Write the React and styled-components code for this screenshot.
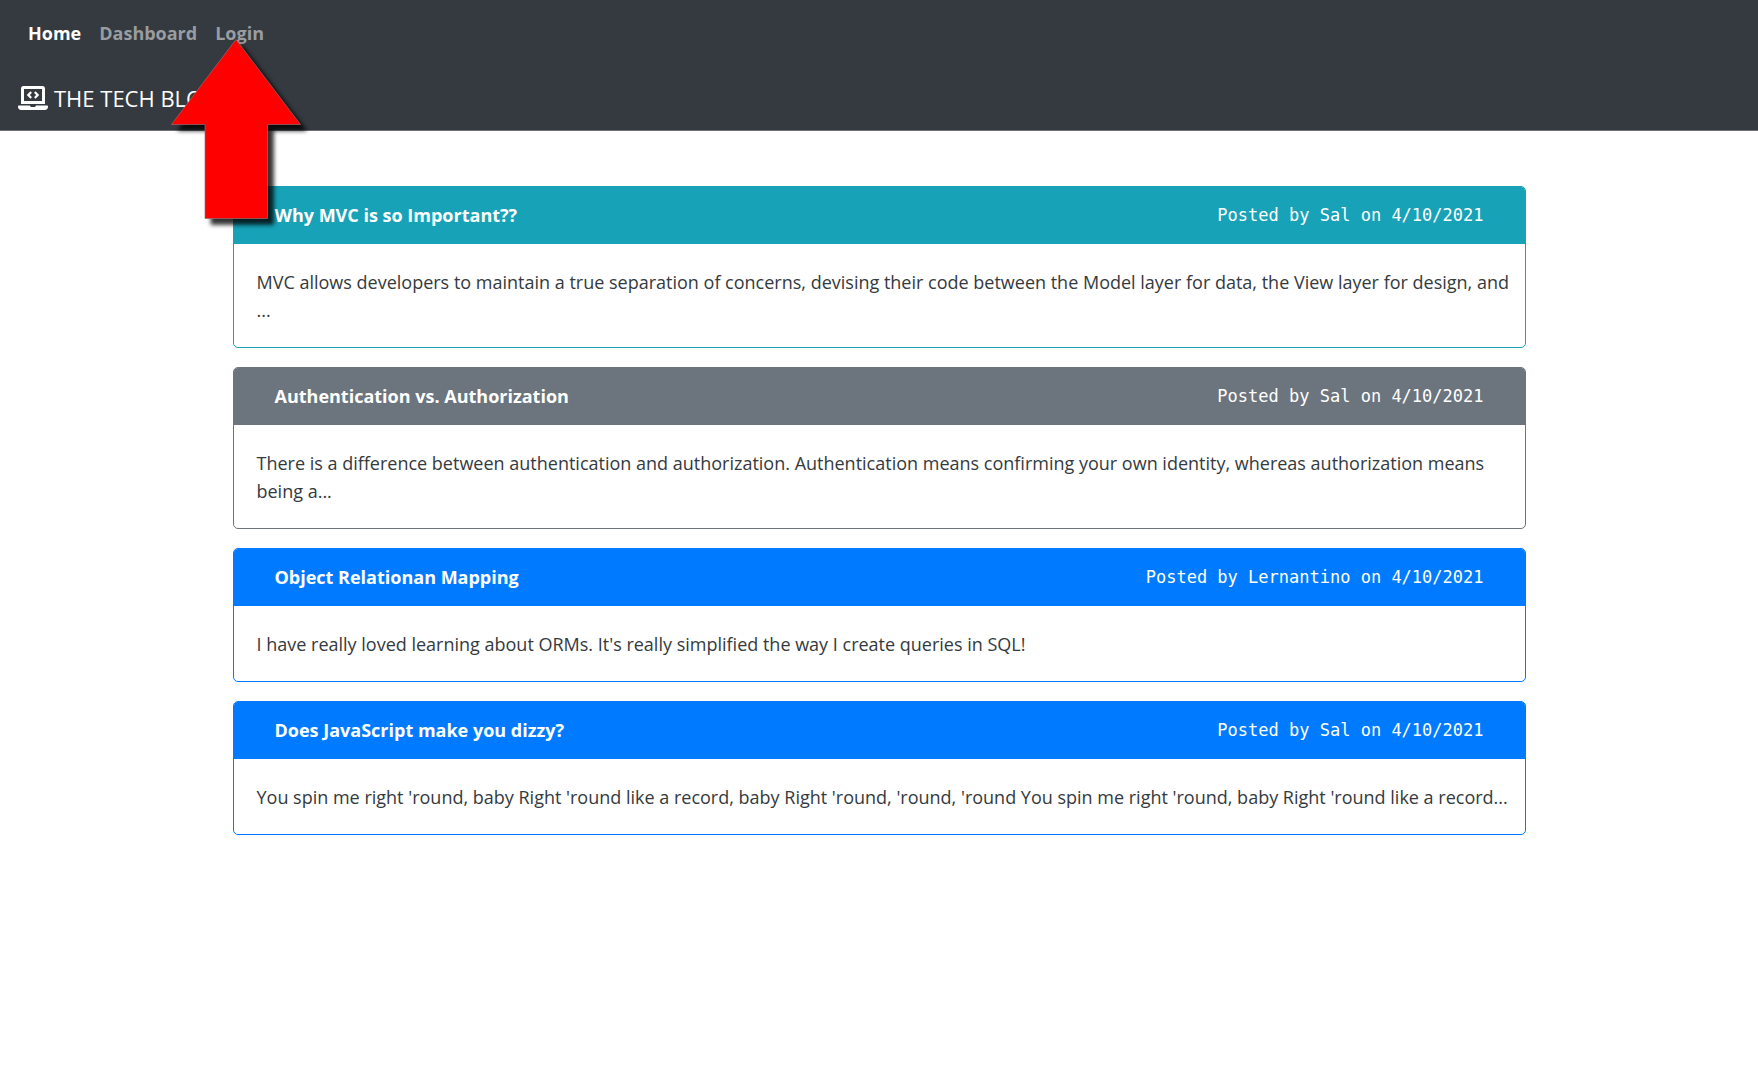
import React from "react";
import styled, { createGlobalStyle } from "styled-components";
import { FaLaptopCode } from "react-icons/fa";

const GlobalStyle = createGlobalStyle`
  *, *::before, *::after { box-sizing: border-box; }
  body {
    margin: 0;
    background: #fff;
    color: #343a40;
    font-family: "Open Sans", "Noto Sans", sans-serif;
    font-size: 18px;
    line-height: 28px;
  }
`;

const Header = styled.header`
  display: flex;
  flex-direction: column;
  gap: 20px;
  padding: 9px 18px 11px;
  background: #343a40;
  border-bottom: 1px solid #6c7075;
`;

const Nav = styled.nav`
  display: flex;
  gap: 18px;
  padding: 10px;
`;

const NavLink = styled.a`
  font-weight: 700;
  text-decoration: none;
  color: ${({ $active }) => ($active ? "#fff" : "#9a9da0")};
`;

const Brand = styled.a`
  display: flex;
  align-items: center;
  gap: 6px;
  padding: 4px 0;
  color: #fff;
  font-size: 22px;
  line-height: 34px;
  text-decoration: none;
`;

const BrandIcon = styled(FaLaptopCode)`
  width: 30px;
  height: 24px;
`;

const Main = styled.main`
  display: flex;
  flex-direction: column;
  gap: 19px;
  max-width: 1293px;
  margin: 55px auto;
`;

const Card = styled.article`
  border: 1px solid ${({ $tone }) => $tone};
  border-radius: 5px;
  overflow: hidden;
`;

const CardHeader = styled.div`
  display: flex;
  align-items: center;
  justify-content: space-between;
  padding: 14px 41px 15px;
  background: ${({ $tone }) => $tone};
  color: #fff;
`;

const Title = styled.h2`
  margin: 0;
  font-size: 18px;
  line-height: 28px;
  font-weight: 700;
`;

const Meta = styled.span`
  font-family: "DejaVu Sans Mono", monospace;
  font-size: 17px;
`;

const Body = styled.p`
  margin: 0;
  padding: 24px 12px 23px 23px;
`;

const Arrow = styled.svg`
  position: absolute;
  left: 160px;
  top: 30px;
  filter: drop-shadow(6px 6px 2px rgba(0, 0, 0, 0.8));
  pointer-events: none;
`;

const posts = [
  {
    title: "Why MVC is so Important??",
    author: "Sal",
    tone: "#17a2b8",
    text: "MVC allows developers to maintain a true separation of concerns, devising their code between the Model layer for data, the View layer for design, and ...",
  },
  {
    title: "Authentication vs. Authorization",
    author: "Sal",
    tone: "#6c757d",
    text: "There is a difference between authentication and authorization. Authentication means confirming your own identity, whereas authorization means being a...",
  },
  {
    title: "Object Relationan Mapping",
    author: "Lernantino",
    tone: "#007bff",
    text: "I have really loved learning about ORMs. It's really simplified the way I create queries in SQL!",
  },
  {
    title: "Does JavaScript make you dizzy?",
    author: "Sal",
    tone: "#007bff",
    text: "You spin me right 'round, baby Right 'round like a record, baby Right 'round, 'round, 'round You spin me right 'round, baby Right 'round like a record...",
  },
];

export default function App() {
  return (
    <>
      <GlobalStyle />
      <Header>
        <Nav>
          <NavLink href="#home" $active>Home</NavLink>
          <NavLink href="#dashboard">Dashboard</NavLink>
          <NavLink href="#login">Login</NavLink>
        </Nav>
        <Brand href="#home">
          <BrandIcon aria-hidden="true" />
          THE TECH BLOG
        </Brand>
      </Header>
      <Main>
        {posts.map((post) => (
          <Card key={post.title} $tone={post.tone}>
            <CardHeader $tone={post.tone}>
              <Title>{post.title}</Title>
              <Meta>Posted by {post.author} on 4/10/2021</Meta>
            </CardHeader>
            <Body>{post.text}</Body>
          </Card>
        ))}
      </Main>
      <Arrow width="150" height="200" viewBox="160 30 150 200" aria-hidden="true">
        <path
          d="M236 39.500 L300.500 124.500 H267.500 V218.500 H205 V124.500 H171.500 Z"
          fill="#ff0000"
          stroke="#9a6a6a"
          strokeWidth="0.700"
        />
      </Arrow>
    </>
  );
}
